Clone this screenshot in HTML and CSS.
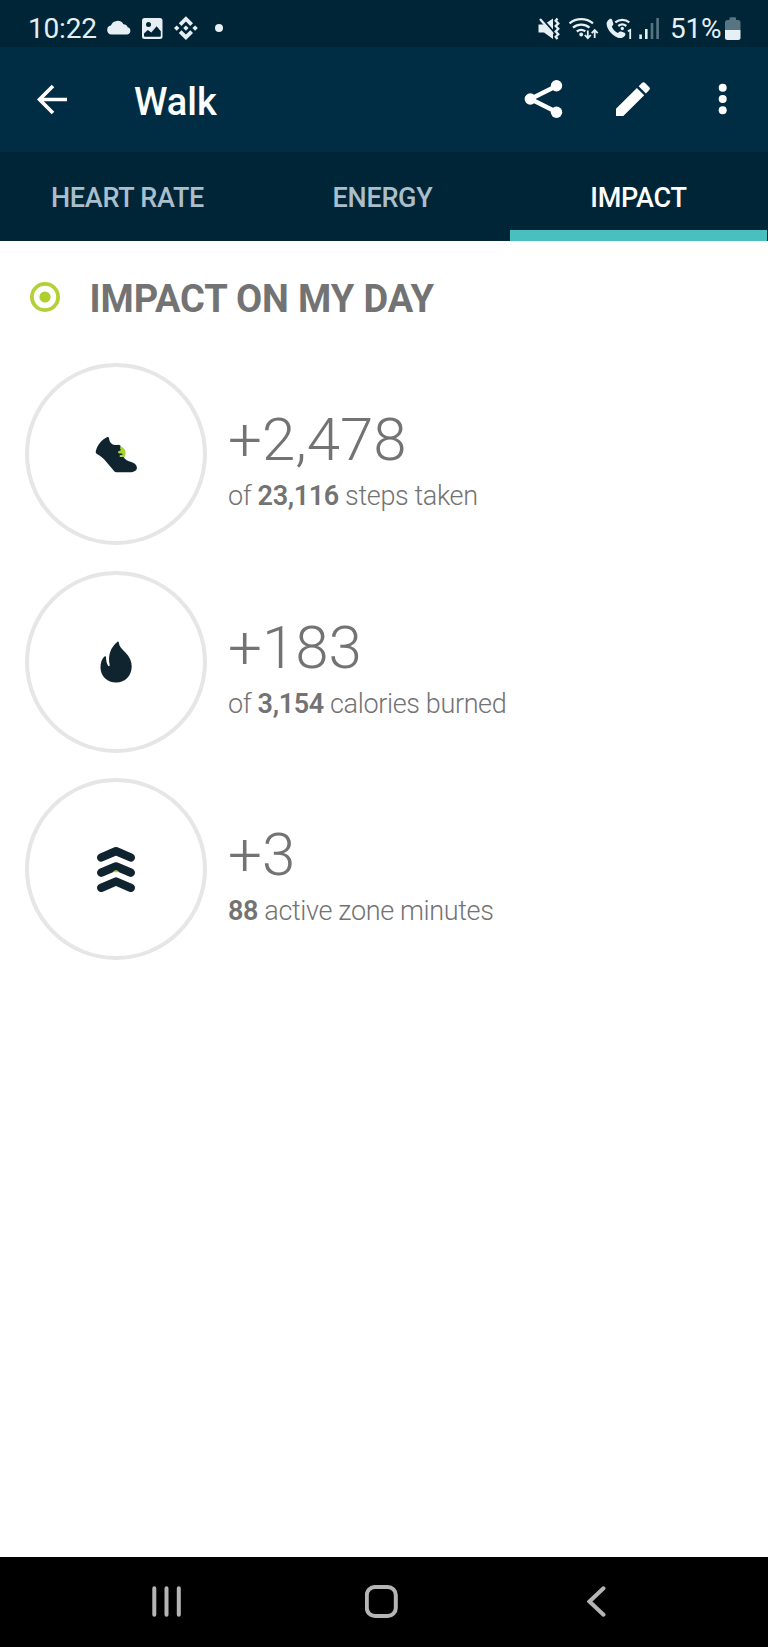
FILE: index.html
```html
<!DOCTYPE html>
<html lang="en">
    <head>
        <meta charset="utf-8">
        <meta name="viewport" content="width=device-width, initial-scale=1">
        <title>Walk</title>
        <link rel="stylesheet" href="styles.css">
    </head>
    <body>
        <!--Phone status bar-->
        <div class="status-bar">
            <div class="status-left">
                <span class="time">10:22</span>
                <svg class="cloud" width="26" height="26" viewBox="106 15 26 26">
                    <path d="M111.500 34.500a4.600 4.600 0 0 1-.6-9.100a7 7 0 0 1 12.500-1.200a4.600 4.600 0 0 1 4.300 3.100a3.700 3.700 0 0 1-.4 7.200z"/>
                </svg>
                <svg class="picture" width="22" height="26" viewBox="142 15 22 26">
                    <rect x="142" y="18" width="20.500" height="21" rx="2.500"/>
                    <path class="cut" d="M144 33.500l3.800-3.500 3.500 2.500 5.300-6.300 4.200 5v4.500a1 1 0 0 1-1 1h-14.800a1 1 0 0 1-1-1z"/>
                    <circle class="cut" cx="148.500" cy="24.500" r="2.500"/>
                </svg>
                <svg class="diamond" width="24" height="26" viewBox="174 15.500 24 26">
                    <path d="M185.900 16.700l7.100 7.100-2.700 2.700-4.400-4.400-4.400 4.400-2.700-2.700zM185.900 40.500l7.100-7.100-2.700-2.700-4.400 4.400-4.400-4.400-2.700 2.700zM185.900 25.900l2.700 2.700-2.700 2.700-2.700-2.700zM176.700 25.900l2.700 2.700-2.700 2.700-2.700-2.700zM195.100 25.900l2.700 2.700-2.700 2.700-2.700-2.700z"/>
                </svg>
                <span class="dot"></span>
            </div>
            <div class="status-right">
                <svg class="mute" width="23" height="26" viewBox="538 15 23 26">
                    <path d="M538.500 24.500h5.500l9-6v20.500l-9-6.500h-5.500z"/>
                    <path class="cut-line" d="M541 17.500l15 17"/>
                    <path class="line" d="M540 19l13 15"/>
                    <path class="line" d="M557.500 18.500l-1.800 2.200 2.600 2.700-2.600 2.700 2.600 2.700-2.600 2.700 2.600 2.700-2.600 2.600 1.800 2.200"/>
                </svg>
                <svg class="wifi" width="31" height="26" viewBox="568.500 15 31 26">
                    <path class="line" d="M570 23.300a18.500 18.500 0 0 1 23.500 0M573.500 27.600a13 13 0 0 1 16.500 0M577.300 31.500a7.300 7.300 0 0 1 8.500-.2"/>
                    <circle cx="581.700" cy="34.500" r="1.900"/>
                    <path class="arrows" d="M588.300 30.500v7M585.300 35l3 3.200 3-3.200M595.200 38v-7M592.200 33.200l3-3.200 3 3.200"/>
                </svg>
                <svg class="call" width="27" height="26" viewBox="606 15 27 26">
                    <path d="M609.300 19.300c1.200-.9 2.600-.3 3 1l.9 3c.4 1.200-.1 2.100-1.400 3.100 1 2.900 3 5.100 6 6.600 1.200-1.300 2.200-1.900 3.400-1.400l2.800 1c1.500.6 1.900 2.100.9 3.200-1.900 2.200-4.600 3-7.600 1.600-5.200-2.400-9.100-6.800-10.500-12-.7-2.600.4-4.600 2.500-6.100z"/>
                    <path class="line" d="M615.300 22.300a11 11 0 0 1 14 0M618.300 26a6.500 6.500 0 0 1 8 0"/>
                    <circle cx="622.300" cy="28.500" r="1.700"/>
                    <path class="arrows" d="M627.800 31.300l2.400-1.300v9"/>
                </svg>
                <svg class="signal" width="21" height="26" viewBox="639 15 21 26">
                    <path d="M639.300 34.500h2.600v4.500h-2.600zM645 29h2.600v10h-2.600z"/>
                    <path class="dim" d="M650.700 23h2.600v16h-2.600zM656.300 18h2.600v21h-2.600z"/>
                </svg>
                <span class="percent">51%</span>
                <svg class="battery" width="16" height="26" viewBox="725 15 16 26">
                    <path class="dim" d="M725 30v-7.500a2.500 2.500 0 0 1 2.500-2.500h2v-1.500a1.300 1.300 0 0 1 1.300-1.300h4a1.300 1.300 0 0 1 1.300 1.300v1.500h1.900a2.500 2.500 0 0 1 2.500 2.500v7.500z"/>
                    <path d="M725 30h15.500v7.500a2.500 2.500 0 0 1-2.500 2.500h-10.500a2.500 2.500 0 0 1-2.500-2.500z"/>
                </svg>
            </div>
        </div>

        <!--Title and actions-->
        <header class="app-bar">
            <svg class="back" width="32" height="40" viewBox="36 79 32 40">
                <path d="M67 99.500h-27.500M53 86l-13.500 13.500 13.500 13.500"/>
            </svg>
            <h1 class="title">Walk</h1>
            <div class="actions">
                <svg width="40" height="40" viewBox="524 79 40 40">
                    <path class="share-line" d="M556.500 86l-26 13 26 13"/>
                    <circle cx="530.300" cy="99" r="5.700"/>
                    <circle cx="556.500" cy="85.800" r="5.700"/>
                    <circle cx="556.500" cy="112.200" r="5.700"/>
                </svg>
                <svg width="36" height="40" viewBox="615 79 36 40">
                    <path d="M616 108.800l20.900-20.900 7.300 7.300-20.900 20.900h-7.300zM649.300 90c.8-.8.8-1.900 0-2.700l-4.500-4.500c-.8-.8-1.900-.8-2.700 0l-3.400 3.400 7.200 7.200z"/>
                </svg>
                <svg width="10" height="40" viewBox="717.500 79 10 40">
                    <circle cx="722.200" cy="87.800" r="4"/>
                    <circle cx="722.200" cy="99" r="4"/>
                    <circle cx="722.200" cy="110.300" r="4"/>
                </svg>
            </div>
        </header>

        <nav class="tabs">
            <a class="tab">HEART RATE</a>
            <a class="tab">ENERGY</a>
            <a class="tab active">IMPACT</a>
        </nav>

        <main class="content">
            <div class="heading">
                <svg width="30" height="30" viewBox="0 0 30 30">
                    <circle class="target-ring" cx="15" cy="15" r="13.100"/>
                    <circle class="target-dot" cx="15" cy="15" r="5.600"/>
                </svg>
                <h2>IMPACT ON MY DAY</h2>
            </div>

            <div class="row">
                <div class="ring">
                    <!--Shoe-->
                    <svg width="44" height="44" viewBox="94 432 44 44">
                        <path class="lace" d="M116 446c4.500-.5 8.800 1.500 9.500 5.500.3 2-.3 4.300-1 5.700l-7-1z"/>
                        <path class="dark" d="M107.500 437c-5.500 2.300-10 7.500-11.800 14.500 0 1.200.4 2 1.300 2.600 3.500 2 6.200 4.200 8.800 7.200l8.700 10.300c.5.400 1 .6 1.800.6h13.500c4.300-.2 7-1.700 7.100-4.300 0-2.900-1.800-4.500-5-5.600-4.200-1-7-3-8.300-5.300h-3c-1.300 0-1.400-1.900 0-2l1.500-.2c.9-.4.6-1.400-.4-1.400l-2.500.1c-1.500-.1-1.700-2.200-.3-2.500l1.500-.5c.8-.6.400-1.400-.3-1.600l.4-3.300-1.700-.9c-5 1.200-9-1-9.600-5.500-.1-1.500-.5-2.500-1.700-2.200z"/>
                    </svg>
                </div>
                <div class="stats">
                    <div class="value">+2,478</div>
                    <div class="detail">of <b>23,116</b> steps taken</div>
                </div>
            </div>

            <div class="row">
                <div class="ring">
                    <!--Flame-->
                    <svg width="44" height="44" viewBox="94 640 44 44">
                        <path class="dark" d="M117.500 641.700c.9-.3 1.300.2 1.400 1.400.3 3.600 3 6 6.500 9.500 4.200 4.300 6.400 8.700 6.300 14-.2 9.500-6.500 16-15.500 16s-15.700-6.400-15.700-15.300c0-4.700 1.400-8.200 4-10.700.8-.8 1.500-.5 1.500.6.100 3 .5 6.300 2 8.400.7 1 2 .5 1.700-.5-2-9.500.8-17.800 7.800-23.400z"/>
                    </svg>
                </div>
                <div class="stats">
                    <div class="value">+183</div>
                    <div class="detail">of <b>3,154</b> calories burned</div>
                </div>
            </div>

            <div class="row">
                <div class="ring">
                    <!--Zone chevrons-->
                    <svg width="44" height="50" viewBox="94 845 44 50">
                        <path class="chevron" d="M101.200 858.500l14.800-6.300 14.800 6.300M101.200 873.700l14.800-6.300 14.800 6.300M101.200 888.800l14.800-6.300 14.800 6.300"/>
                        <path class="lace" d="M113.200 872.700c1-2 4.600-2 5.600 0-1.500.8-4.100.8-5.600 0z"/>
                    </svg>
                </div>
                <div class="stats">
                    <div class="value">+3</div>
                    <div class="detail"><b>88</b> active zone minutes</div>
                </div>
            </div>
        </main>

        <!--Phone navigation buttons-->
        <footer class="nav-bar">
            <svg width="30" height="34" viewBox="0 0 30 34">
                <path d="M2.300 3.300v26.500M14.500 3.300v26.500M26.800 3.300v26.500"/>
            </svg>
            <svg width="34" height="34" viewBox="0 0 34 34">
                <rect x="1.800" y="2" width="29" height="29" rx="8"/>
            </svg>
            <svg width="20" height="34" viewBox="0 0 20 34">
                <path d="M16.500 3.300l-14 13.200 14 13.200"/>
            </svg>
        </footer>
    </body>
</html>
```
FILE: styles.css
```css
html {box-sizing: border-box;}
*, *:before, *:after {
    box-sizing: inherit;
}

body {
    margin: 0;
    display: flex;
    flex-direction: column;
    width: 768px;
    height: 1647px;
    background-color: white;
    font-family: Roboto, "Liberation Sans", sans-serif;
}

svg {
    display: block;
    flex: none;
}

/*Status bar*/
.status-bar {
    display: flex;
    justify-content: space-between;
    height: 47px;
    padding: 0 27px 0 28px;
    background-color: #002537;
    color: #e6eff4;
    font-size: 28px;
    letter-spacing: -0.2px;
    line-height: 57px;
}

.status-bar svg {
    margin-top: 15px;
    fill: #e6eff4;
}

.status-left, .status-right {
    display: flex;
}

.time {
    width: 78px;
}

.picture {
    margin-left: 10px;
}

.diamond {
    margin-left: 10px;
}

.dot {
    width: 8px;
    height: 8px;
    margin: 24px 0 0 17px;
    border-radius: 50%;
    background-color: #e6eff4;
}

.status-bar .cut {
    fill: #002537;
}

.status-bar .cut-line {
    fill: none;
    stroke: #002537;
    stroke-width: 2;
}

.status-bar .line {
    fill: none;
    stroke: #e6eff4;
    stroke-width: 2.3;
}

.status-bar .arrows {
    fill: none;
    stroke: #e6eff4;
    stroke-width: 1.8;
}

.status-bar .dim {
    fill: #577483;
}

.wifi, .call {
    margin-left: 7px;
}

.signal {
    margin-left: 6px;
}

.percent {
    width: 55px;
    padding-left: 10px;
}

.battery {
    margin-left: 10px;
}

/*App bar*/
.app-bar {
    display: flex;
    align-items: center;
    height: 105px;
    padding: 0 40px 0 36px;
    background-color: #002d43;
    color: white;
}

.app-bar svg {
    margin-top: -1px;
    fill: white;
}

.back path {
    fill: none;
    stroke: white;
    stroke-width: 3.6;
}

.title {
    margin: 4px 0 0 66px;
    font-size: 38px;
    font-weight: 500;
    line-height: 44px;
}

.actions {
    display: flex;
    gap: 51px;
    margin-left: auto;
}

.actions svg:last-child {
    margin-left: 16px;
}

.share-line {
    fill: none;
    stroke: white;
    stroke-width: 4.5;
}

/*Tabs*/
.tabs {
    display: flex;
    height: 89px;
    padding-right: 1px;
    background-color: #002537;
}

.tab {
    flex: 1;
    padding-top: 1px;
    border-bottom: 11px solid transparent;
    color: #aabecb;
    font-size: 27px;
    font-weight: 500;
    letter-spacing: -0.27px;
    line-height: 91px;
    text-align: center;
}

.tab.active {
    flex: 0 0 257px;
    color: white;
    border-bottom-color: #4abfbf;
}

/*Impact list*/
.content {
    flex: 1;
    padding: 36px 25px 0 25px;
    color: #737373;
}

.heading {
    display: flex;
    align-items: center;
    height: 44px;
    padding-left: 4.5px;
    margin-bottom: 42px;
}

.heading svg {
    margin-top: -4px;
}

.heading h2 {
    margin: 0 0 0 30px;
    font-size: 38px;
    font-weight: 700;
    letter-spacing: -0.12px;
    line-height: 44px;
}

.target-ring {
    fill: none;
    stroke: #b3d136;
    stroke-width: 3.8;
}

.target-dot {
    fill: #aecf2c;
}

.row {
    display: flex;
    margin-bottom: 25.7px;
}

.ring {
    display: flex;
    align-items: center;
    justify-content: center;
    width: 182px;
    height: 182px;
    border: 4px solid #e6e6e6;
    border-radius: 50%;
}

.dark {
    fill: #10242f;
}

.lace {
    fill: #a6d52f;
}

.chevron {
    fill: none;
    stroke: #10242f;
    stroke-width: 8.4;
    stroke-linecap: round;
    stroke-linejoin: round;
}

.stats {
    padding: 41px 0 0 21px;
}

.value {
    font-size: 60px;
    font-weight: 300;
    line-height: 72px;
}

.detail {
    font-size: 27px;
    font-weight: 300;
    letter-spacing: -0.36px;
    line-height: 40px;
}

.detail b {
    font-weight: 600;
}

/*Navigation buttons*/
.nav-bar {
    display: flex;
    height: 90px;
    padding: 28px 0 0 152px;
    background-color: black;
}

.nav-bar svg {
    fill: none;
    stroke: #b5b5b5;
    stroke-width: 4;
    stroke-linecap: round;
}

.nav-bar svg:nth-child(2) {
    margin-left: 183px;
}

.nav-bar svg:nth-child(3) {
    margin-left: 188px;
}
```
